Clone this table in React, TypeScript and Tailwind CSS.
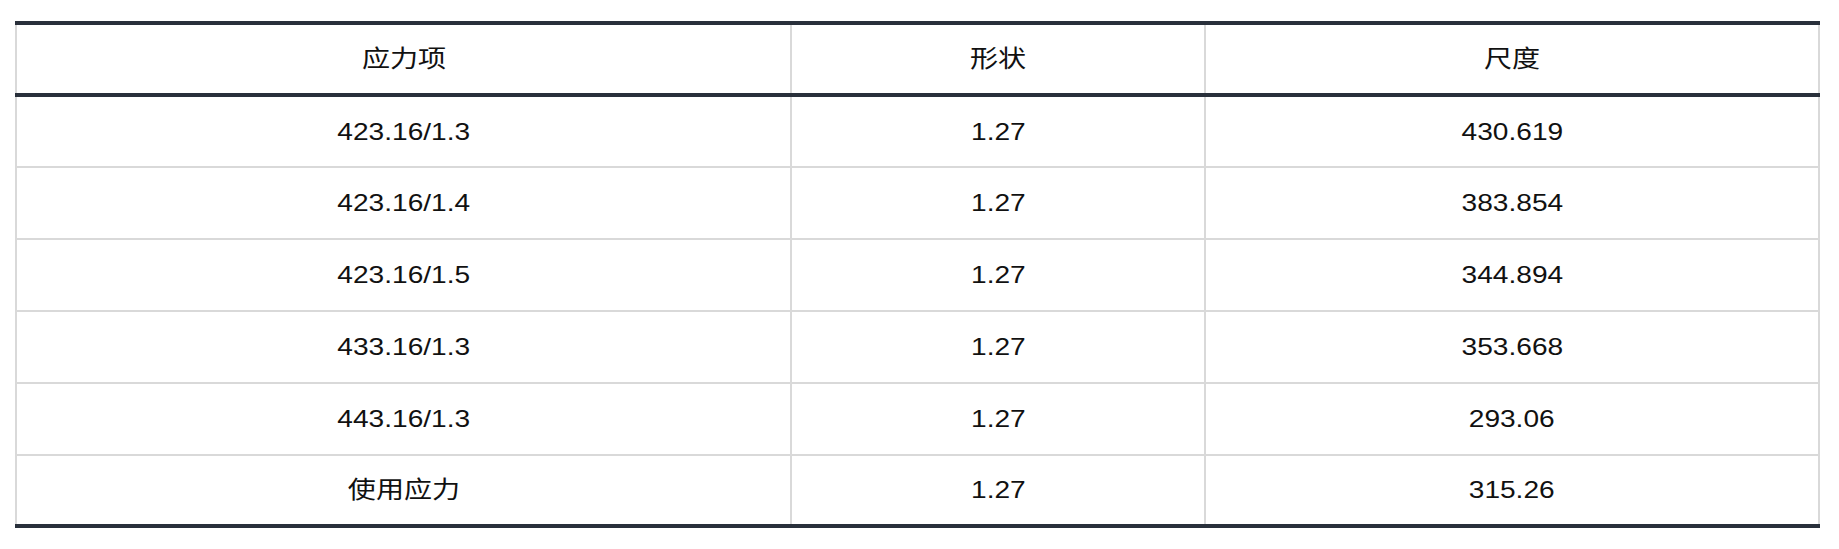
import React from "react";

const rows: [string, string, string][] = [
  ["423.16/1.3", "1.27", "430.619"],
  ["423.16/1.4", "1.27", "383.854"],
  ["423.16/1.5", "1.27", "344.894"],
  ["433.16/1.3", "1.27", "353.668"],
  ["443.16/1.3", "1.27", "293.06"],
  ["使用应力", "1.27", "315.26"],
];

function Cell({ children, last }: { children: React.ReactNode; last?: boolean }) {
  return (
    <div
      className={
        last
          ? "flex items-center justify-center border-l-2 border-r-2 border-[#d9d9d9]"
          : "flex items-center justify-center border-l-2 border-[#d9d9d9]"
      }
    >
      <span className="inline-block scale-x-[1.17] text-[24px] leading-none text-[#111]">{children}</span>
    </div>
  );
}

export default function App() {
  return (
    <div
      className="min-h-[549px] bg-white pt-[21px] pl-[15px]"
      style={{ fontFamily: '"Liberation Sans", Arial, "Noto Sans CJK SC", sans-serif' }}
    >
      <div className="w-[1805px] border-t-4 border-b-4 border-[#29303b]">
        <div className="grid h-[72px] grid-cols-[775px_414px_616px] border-b-4 border-[#29303b]">
          <Cell>应力项</Cell>
          <Cell>形状</Cell>
          <Cell last>尺度</Cell>
        </div>
        {rows.map((r, i) => (
          <div
            key={i}
            className={
              i === rows.length - 1
                ? "grid h-[68px] grid-cols-[775px_414px_616px]"
                : i === 0
                ? "grid h-[71px] grid-cols-[775px_414px_616px] border-b-2 border-[#d9d9d9]"
                : "grid h-[72px] grid-cols-[775px_414px_616px] border-b-2 border-[#d9d9d9]"
            }
          >
            <Cell>{r[0]}</Cell>
            <Cell>{r[1]}</Cell>
            <Cell last>{r[2]}</Cell>
          </div>
        ))}
      </div>
    </div>
  );
}
